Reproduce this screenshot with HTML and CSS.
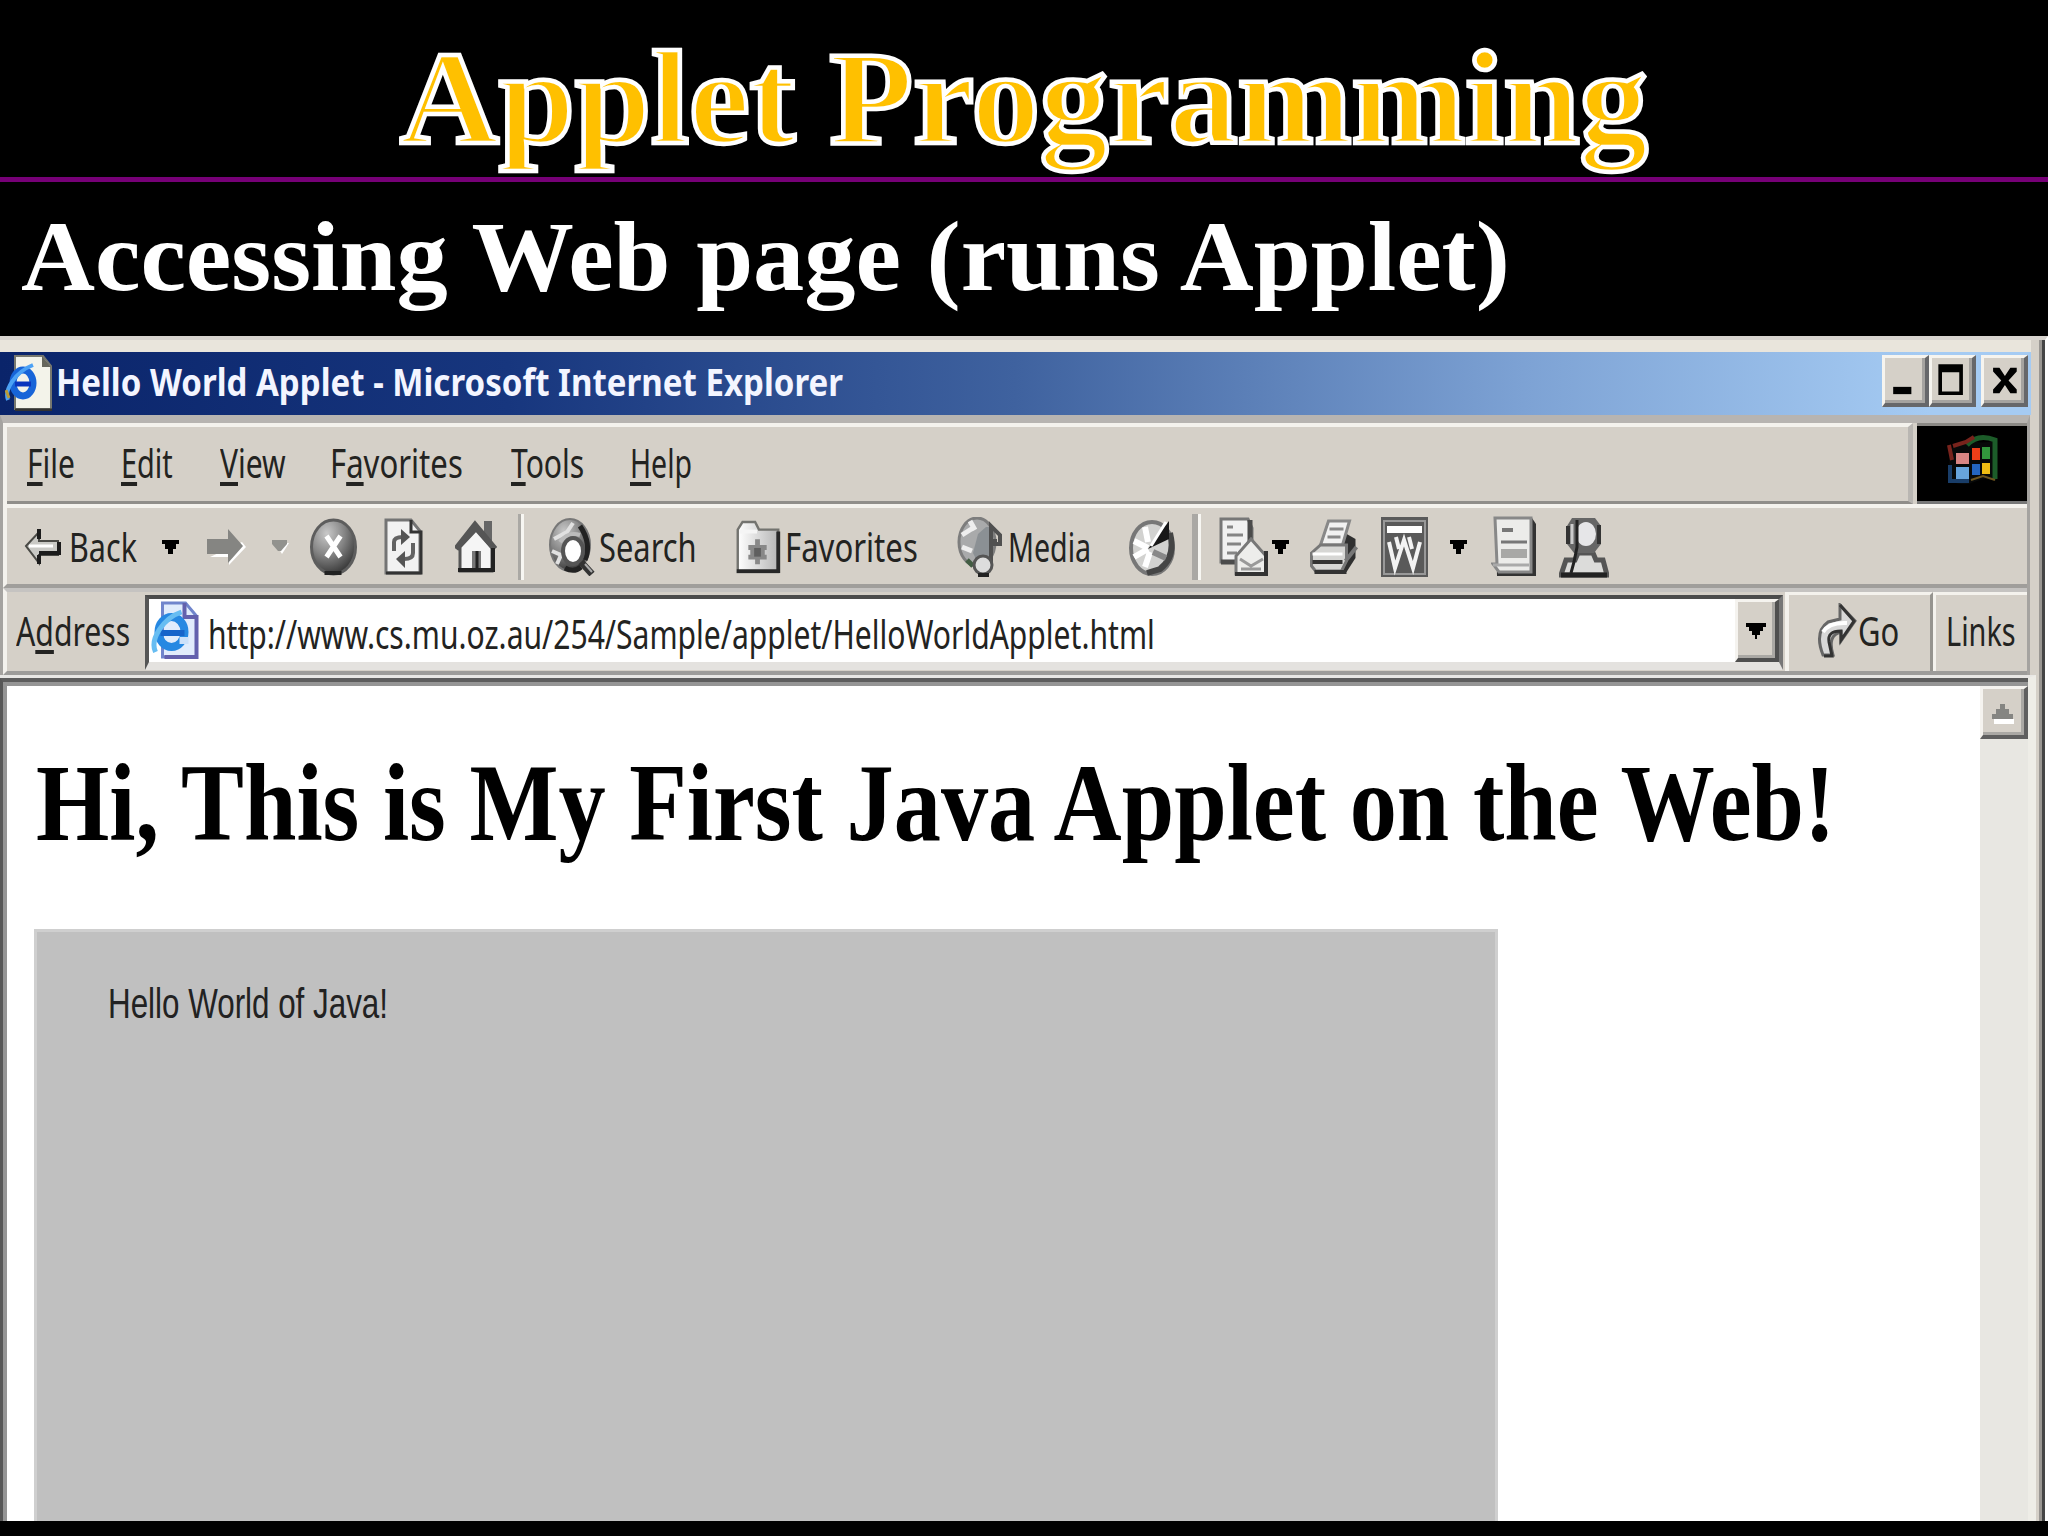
FILE: index.html
```
<!DOCTYPE html>
<html lang="en">
<head>
    <meta charset="UTF-8">
    <title>Applet Programming</title>
    <link rel="stylesheet" href="styles.css">
</head>
<body>
    <header class="slide-header">
        <h1 class="fit slide-title"><span>Applet Programming</span></h1>
    </header>
    <h2 class="fit slide-subtitle"><span>Accessing Web page (runs Applet)</span></h2>

    <div class="window">
        <div class="titlebar">
            <svg class="title-icon" viewBox="0 0 48 56">
                <path d="M10 1h28l8 10v43H10z" fill="#f3f3ea" stroke="#77786f" stroke-width="2"/>
                <path d="M37 1v11h9z" fill="#66665c"/>
                <path d="M10 55h37" stroke="#333" stroke-width="3"/>
                <ellipse cx="18" cy="28" rx="10" ry="13" fill="none" stroke="#1764d8" stroke-width="7"/>
                <path d="M10 29h16" stroke="#0a35bd" stroke-width="5"/>
                <path d="M3 45C-1 35 10 17 28 10" fill="none" stroke="#4ba1f5" stroke-width="4"/>
                <path d="M1 35l3 8" stroke="#b99c37" stroke-width="3"/>
            </svg>
            <div class="fit title-text"><span>Hello World Applet - Microsoft Internet Explorer</span></div>
            <div class="win-buttons">
                <div class="win-btn"><svg viewBox="0 0 44 48"><path d="M9 31h20v8H9z"/></svg></div>
                <div class="win-btn"><svg viewBox="0 0 44 48"><path d="M7 6h27v34H7zM11 15v21h19V15z" fill-rule="evenodd"/></svg></div>
                <div class="win-btn close"><svg viewBox="0 0 44 48"><path d="M10 10h7l6 9 6-9h7v4l-9 10 9 10v4h-7l-6-9-6 9h-7v-4l9-10-9-10z"/></svg></div>
            </div>
        </div>

        <div class="bars">
            <div class="menubar">
                <div class="menus">
                    <div class="fit menu file"><span><u>F</u>ile</span></div>
                    <div class="fit menu edit"><span><u>E</u>dit</span></div>
                    <div class="fit menu view"><span><u>V</u>iew</span></div>
                    <div class="fit menu favorites"><span>F<u>a</u>vorites</span></div>
                    <div class="fit menu tools"><span><u>T</u>ools</span></div>
                    <div class="fit menu help"><span><u>H</u>elp</span></div>
                </div>
                <div class="logo">
                    <svg viewBox="0 0 56 56">
                        <path d="M4 19Q18 5 29 9T51 7V49Q39 45 29 50T5 49z" fill="#070909"/>
                        <path d="M22 13Q33 1 50 8v39" fill="none" stroke="#1c5c29" stroke-width="5"/>
                        <path d="M4 13l3 15M8 14l13-4 8-5" fill="none" stroke="#78231c" stroke-width="4"/>
                        <path d="M5 33v16h19" fill="none" stroke="#193d68" stroke-width="4"/>
                        <path d="M26 48l12-4 12 4" fill="none" stroke="#6c541e" stroke-width="2"/>
                        <path d="M11 21h13v11H11z" fill="#d88583"/>
                        <path d="M11 35h13v12H11z" fill="#67a4dc"/>
                        <path d="M27 16h8v12h-8z" fill="#ed3e18"/>
                        <path d="M37 15h8v12h-8z" fill="#31973c"/>
                        <path d="M27 32h8v11h-8z" fill="#2465bf"/>
                        <path d="M37 31h8v11h-8z" fill="#f0bd13"/>
                    </svg>
                </div>
            </div>

            <div class="toolbar">
                <svg class="ico back-ico" viewBox="0 0 38 38">
                    <path d="M3 18L16 4v9h19v14H16v8z" fill="#c9c9c5" stroke="#4a4a46" stroke-width="2"/>
                    <path d="M16 1v10M16 27v9M16 25h20V14" fill="none" stroke="#1c1c1c" stroke-width="4"/>
                    <path d="M6 18h24" stroke="#fff" stroke-width="3"/>
                </svg>
                <div class="fit label back"><span>Back</span></div>
                <svg class="caret c1" viewBox="0 0 17 14"><path d="M0 0h17v4h-3v5h-3v5H6V9H3V4H0z"/></svg>
                <svg class="ico fwd-ico" viewBox="0 0 40 38">
                    <path d="M3 29h19v8l17-18-4-5" fill="#fff"/>
                    <path d="M0 11h21V1l15 17-15 17v-9H0z" fill="#858582"/>
                </svg>
                <svg class="caret c2" viewBox="0 0 17 14"><path d="M3 3h14l-7 11z" fill="#fff"/><path d="M0 0h15v4l-6 7H6L0 4z" fill="#92928e"/></svg>
                <svg class="ico stop-ico" viewBox="0 0 48 58">
                    <defs>
                        <radialGradient id="ball" cx=".35" cy=".25" r=".8"><stop offset="0" stop-color="#c9c9c9"/><stop offset=".5" stop-color="#858585"/><stop offset="1" stop-color="#333"/></radialGradient>
                        <linearGradient id="paper"><stop offset="0" stop-color="#fff"/><stop offset="1" stop-color="#b6b6b6"/></linearGradient>
                    </defs>
                    <ellipse cx="24" cy="29" rx="22" ry="27" fill="url(#ball)" stroke="#5d5d5d" stroke-width="3"/>
                    <path d="M15 55h17" stroke="#222" stroke-width="4"/>
                    <path d="M17 18l14 21M31 18L17 39" stroke="#fff" stroke-width="5"/>
                </svg>
                <svg class="ico refresh-ico" viewBox="0 0 39 58">
                    <path d="M2 2h25l9 11v42H2z" fill="#f2f2f2" stroke="#747474" stroke-width="3"/>
                    <path d="M27 2v12h10v41H2" fill="none" stroke="#333" stroke-width="3"/>
                    <path d="M10 33V24q0-5 9-5M29 25v10q0 6-9 6" fill="none" stroke="#626262" stroke-width="4"/>
                    <path d="M17 11l9 8-9 8zM21 33l-9 8 9 9z" fill="#555"/>
                </svg>
                <svg class="ico home-ico" viewBox="0 0 42 54">
                    <path d="M29 1h8v22h-8z" fill="#666"/>
                    <path d="M5 27L21 10l16 18v23H5z" fill="#f5f5f5" stroke="#555" stroke-width="3"/>
                    <path d="M1 29L20 5l20 24" fill="none" stroke="#555" stroke-width="6"/>
                    <path d="M17 51V31h9v20z" fill="#777"/><path d="M22 31v20" stroke="#222" stroke-width="3"/>
                    <path d="M3 50h35V28" fill="none" stroke="#222" stroke-width="4"/>
                </svg>
                <div class="sep s1"></div>
                <svg class="ico search-ico" viewBox="0 0 48 58">
                    <ellipse cx="22" cy="27" rx="20" ry="26" fill="url(#ball)" stroke="#777" stroke-width="2"/>
                    <path d="M6 21l13-7 6-9M4 33l9 4-4 9" fill="none" stroke="#e1e1e1" stroke-width="4"/>
                    <path d="M12 24q8-11 20-7" fill="none" stroke="#bbb" stroke-width="4"/>
                    <path d="M32 8q12 18 5 34" fill="none" stroke="#222" stroke-width="5"/>
                    <ellipse cx="25" cy="33" rx="10" ry="13" fill="#fff" stroke="#555" stroke-width="4"/>
                    <path d="M17 50q9 5 16-1" fill="none" stroke="#222" stroke-width="5"/>
                    <path d="M33 44l11 12" stroke="#333" stroke-width="7"/>
                    <path d="M37 46l7 8" stroke="#aaa" stroke-width="2"/>
                </svg>
                <div class="fit label search"><span>Search</span></div>
                <svg class="ico fav-ico" viewBox="0 0 46 56">
                    <path d="M2 54V10L7 2h13l4 8h20v44z" fill="url(#paper)" stroke="#73736f" stroke-width="2.5"/>
                    <path d="M4 12h18" stroke="#f5f5f5" stroke-width="4"/>
                    <path d="M20 20h5v6h7v5h-2v5h2v5h-7v5h-5v-5h-7v-5h2v-5h-2v-5h7z" fill="#888"/>
                    <path d="M19 29h7v9h-7z" fill="#5f5f5f"/>
                    <path d="M1 53h43V12" fill="none" stroke="#272727" stroke-width="4"/>
                </svg>
                <div class="fit label fav"><span>Favorites</span></div>
                <svg class="ico media-ico" viewBox="0 0 48 60">
                    <ellipse cx="20" cy="25" rx="18" ry="24" fill="#a9aaab" stroke="#7d7d7d" stroke-width="3"/>
                    <path d="M5 18l11-7M5 30l10 4M13 4l5 9" stroke="#eee" stroke-width="5"/>
                    <path d="M16 36l5-19 8-7h5v32H19z" fill="#8b9094"/>
                    <path d="M34 49V9l9 9v9h-5v-5" fill="none" stroke="#505050" stroke-width="4"/>
                    <path d="M10 43l6 6" stroke="#425d43" stroke-width="5"/>
                    <ellipse cx="26" cy="48" rx="9" ry="9" fill="#ddd" stroke="#555" stroke-width="3"/>
                    <path d="M21 58h11" stroke="#222" stroke-width="4"/>
                </svg>
                <div class="fit label media"><span>Media</span></div>
                <svg class="ico history-ico" viewBox="0 0 48 60">
                    <ellipse cx="24" cy="31" rx="21" ry="26" fill="#d2d2d0" stroke="#777" stroke-width="4"/>
                    <path d="M42 16q6 24-10 36l-13 4" fill="none" stroke="#454545" stroke-width="6"/>
                    <path d="M17 10l3 15M6 24l14 7M6 40l14-8M17 50l5-15" stroke="#fff" stroke-width="6"/>
                    <path d="M20 32L41 4v18z" fill="#181818"/><path d="M23 29L38 5" stroke="#fff" stroke-width="3"/>
                    <path d="M25 35l13 6" stroke="#888" stroke-width="6"/>
                </svg>
                <div class="sep s2"></div>
                <svg class="ico mail-ico" viewBox="0 0 50 60">
                    <path d="M2 2h27l4 9v34H2z" fill="#f1f1f1" stroke="#777" stroke-width="3"/>
                    <path d="M31 3v28M2 45h16" stroke="#4b4b4b" stroke-width="5"/>
                    <path d="M8 10h6M8 18h16M8 27h14M8 36h10" stroke="#858585" stroke-width="3"/>
                    <path d="M17 57V39l15-17 15 17v18z" fill="#ededeb" stroke="#777" stroke-width="3"/>
                    <path d="M21 42l11 7 12-7M22 52h20" fill="none" stroke="#999" stroke-width="3"/>
                    <path d="M16 57h31V34" fill="none" stroke="#333" stroke-width="4"/>
                </svg>
                <svg class="caret c3" viewBox="0 0 17 14"><path d="M0 0h17v4h-3v5h-3v5H6V9H3V4H0z"/></svg>
                <svg class="ico print-ico" viewBox="0 0 50 56">
                    <path d="M32 12l14 8v19l-9 14H23z" fill="#303030"/>
                    <path d="M11 26L19 2h21l-7 24z" fill="#f1f1f1" stroke="#888" stroke-width="3"/>
                    <path d="M20 10h14M18 18h13" stroke="#888" stroke-width="3"/>
                    <path d="M2 34l9-8h26v16l-5 10H6l-4-5z" fill="#d6d6d4" stroke="#777" stroke-width="3"/>
                    <path d="M3 35h30" stroke="#fff" stroke-width="3"/><path d="M3 43h30M5 53h32" stroke="#333" stroke-width="4"/>
                    <path d="M36 42l11-14" stroke="#777" stroke-width="4"/>
                </svg>
                <svg class="ico word-ico" viewBox="0 0 47 60">
                    <path d="M0 0h47v60H0z" fill="#5a5a5a"/>
                    <path d="M3 4h41v53H3z" fill="none" stroke="#999" stroke-width="2"/>
                    <path d="M6 9h35v7H6z" fill="#fff"/>
                    <path d="M8 25l6 26 9-28 9 28 7-26M15 20l3 12M28 20l3 12" fill="none" stroke="#f3f3f3" stroke-width="4"/>
                </svg>
                <svg class="caret c4" viewBox="0 0 17 14"><path d="M0 0h17v4h-3v5h-3v5H6V9H3V4H0z"/></svg>
                <svg class="ico doc-ico" viewBox="0 0 48 62">
                    <path d="M5 2h36l4 6v52H6z" fill="#333"/>
                    <path d="M4 2h36v54H8l-6-8h4z" fill="#ececea" stroke="#888" stroke-width="3"/>
                    <path d="M11 14h11" stroke="#777" stroke-width="4"/><path d="M10 26h26" stroke="#777" stroke-width="3"/>
                    <path d="M10 33h26v9H10z" fill="#a8a8a6"/>
                    <path d="M2 49h36" stroke="#aaa" stroke-width="3"/>
                </svg>
                <svg class="ico person-ico" viewBox="0 0 50 62">
                    <path d="M2 59l5-15h9l3-7h15l3 7h7l4 15z" fill="#dcdcda" stroke="#555" stroke-width="5"/>
                    <path d="M2 59h46" stroke="#222" stroke-width="5"/>
                    <path d="M13 2h23l6 8v18l-7 9H15l-7-9V10z" fill="#666"/>
                    <ellipse cx="27" cy="18" rx="10" ry="12" fill="#e6e6e8"/>
                    <path d="M18 4v27l-3 15-3 11" fill="none" stroke="#222" stroke-width="3"/>
                    <path d="M13 8v20" stroke="#ccc" stroke-width="3"/>
                    <path d="M9 10v18M40 9v19" fill="none" stroke="#333" stroke-width="4"/>
                </svg>
            </div>

            <div class="addressbar">
                <div class="fit label address"><span>A<u>d</u>dress</span></div>
                <div class="field">
                    <svg class="url-icon" viewBox="0 0 48 58">
                        <path d="M11 2h23l11 13v41H11z" fill="#e1ecfc" stroke="#7085cc" stroke-width="3"/>
                        <path d="M33 2v14h12v40H13" fill="none" stroke="#6361ad" stroke-width="4"/>
                        <ellipse cx="20" cy="31" rx="13" ry="15" fill="none" stroke="#2688e2" stroke-width="8"/>
                        <path d="M9 32h24" stroke="#1764ca" stroke-width="6"/>
                        <path d="M4 51C-2 38 12 17 30 11" fill="none" stroke="#67bdf2" stroke-width="5"/>
                        <path d="M28 36h9v7h-9z" fill="#cce1fa"/>
                    </svg>
                    <div class="fit label url"><span>http://www.cs.mu.oz.au/254/Sample/applet/HelloWorldApplet.html</span></div>
                    <div class="drop"><svg class="caret" viewBox="0 0 20 16"><path d="M0 0h20v4h-3v4h-3v4h-3v4H9v-4H6V8H3V4H0z"/></svg></div>
                </div>
                <div class="go">
                    <svg class="go-icon" viewBox="0 0 40 55">
                        <path d="M11 52H6Q-3 29 11 19l12-3V2l15 16-14 20v-9q-14 3-8 23z" fill="#d8d8d8" stroke="#666" stroke-width="3"/>
                        <path d="M6 29q6-10 24-9" fill="none" stroke="#fff" stroke-width="4"/>
                        <path d="M23 2l14 16-13 19v-9q-14 0-12 11l3 14H7" fill="none" stroke="#333" stroke-width="3"/>
                    </svg>
                    <div class="fit label go-text"><span>Go</span></div>
                </div>
                <div class="links"><div class="fit label links-text"><span>Links</span></div></div>
            </div>
        </div>

        <div class="page">
            <div class="document">
                <h1 class="fit page-title"><span>Hi, This is My First Java Applet on the Web!</span></h1>
                <div class="applet"><div class="fit applet-text"><span>Hello World of Java!</span></div></div>
            </div>
            <div class="scrollbar">
                <div class="scroll-btn"><svg viewBox="0 0 22 20"><path d="M2 15h20v5H2z" fill="#fff"/><path d="M8 0h5v5h4v5h4v5H0v-5h4V5h4z" fill="#858582"/></svg></div>
            </div>
        </div>
    </div>
    <script src="fit.js"></script>
</body>
</html>
```
FILE: styles.css
```
* {
    box-sizing: border-box;
}
body {
    margin: 0;
    width: 2048px;
    height: 1536px;
    overflow: hidden;
    background: #000;
    font-family: "Noto Sans", sans-serif;
}
svg {
    display: block;
    flex: none;
}
h1, h2 {
    margin: 0;
}
/* fixed width text, the inner span is squeezed to the width in fit.js */
.fit {
    flex: none;
    white-space: nowrap;
}
.fit span {
    display: inline-block;
    transform-origin: 0 50%;
}
.slide-header {
    height: 182px;
    padding-top: 20px;
    border-bottom: 5px solid #760076;
}
.slide-title {
    width: 1248px;
    margin: 0 auto;
    font: bold 133px/156px "Liberation Serif", serif;
    color: #ffc000;
    -webkit-text-stroke: 4.5px #fff;
}
.slide-subtitle {
    width: 1489px;
    height: 154px;
    margin-left: 21px;
    padding-top: 17px;
    font: bold 100px/116px "Liberation Serif", serif;
    color: #fff;
}
.window {
    display: flex;
    flex-direction: column;
    width: 2048px;
    height: 1185px;
    overflow: hidden;
    background: #d5d0c8;
    border-right: 3px solid #fff;
    box-shadow: inset -3px 0 #454545, inset -6px 0 #999692;
    border-top: 4px solid #d8d4cf;
}
.titlebar {
    display: flex;
    height: 75px;
    width: 2031px;
    padding: 3px 3px 0 5px;
    border-top: 12px solid #e9e5dc;
    background: linear-gradient(90deg, #0a246a 0, #17367e 25%, #3f629f 50%, #7da2d4 75%, #a5cbf3 95%);
}
.title-icon {
    width: 48px;
    height: 56px;
}
.title-text {
    width: 787px;
    margin-left: 3px;
    font-size: 38px;
    font-weight: bold;
    line-height: 52px;
    color: #f3f5ff;
}
.win-buttons {
    display: flex;
    margin-left: auto;
}
.win-btn {
    width: 47px;
    height: 52px;
    background: #d5d0c8;
    border-style: solid;
    border-width: 3px 4px 4px 3px;
    border-color: #f6f4ef #66676a #66676a #f6f4ef;
    box-shadow: inset -3px -3px #a5a3a0;
}
.win-btn.close {
    margin-left: 5px;
}
.win-btn svg {
    width: 40px;
    height: 45px;
}
.bars {
    width: 2030px;
    border-top: 8px solid #b7b4b1;
    border-left: 3px solid #a5a3a0;
    border-right: 3px solid #a5a3a0;
}
.menubar {
    display: flex;
    height: 81px;
    border-left: 4px solid #f4f2ed;
}
.menus {
    display: flex;
    width: 1906px;
    padding-left: 20px;
    border-top: 4px solid #f4f2ed;
    border-bottom: 3px solid #908e8a;
    border-right: 5px solid #b9b6b2;
}
.menu, .label {
    font-size: 40px;
    color: #232321;
}
.menu {
    line-height: 71px;
}
u {
    text-decoration-thickness: 4px;
    text-underline-offset: 4px;
    text-decoration-skip-ink: none;
}
.file { width: 48px; }
.edit { width: 52px; margin-left: 46px; }
.view { width: 66px; margin-left: 47px; }
.favorites { width: 133px; margin-left: 44px; }
.tools { width: 73px; margin-left: 48px; }
.help { width: 62px; margin-left: 46px; }
.logo {
    flex: 1;
    margin-left: 4px;
    padding: 6px 0 0 28px;
    background: #000;
    border-top: 3px solid #8b8985;
    border-bottom: 3px solid #777;
}
.logo svg {
    width: 56px;
    height: 56px;
}
.toolbar {
    display: flex;
    align-items: center;
    height: 84px;
    padding: 2px 0 0 16px;
    border-left: 4px solid #f4f2ed;
    border-top: 4px solid #f4f2ed;
    border-bottom: 4px solid #a09e9b;
}
.toolbar .label {
    line-height: 52px;
}
.back-ico { width: 38px; height: 38px; }
.fwd-ico { width: 40px; height: 38px; margin-left: 28px; }
.stop-ico { width: 49px; height: 58px; margin-left: 20px; }
.refresh-ico { width: 39px; height: 58px; margin-left: 26px; }
.home-ico { width: 42px; height: 54px; margin-left: 32px; }
.search-ico { width: 48px; height: 58px; margin-left: 24px; }
.fav-ico { width: 46px; height: 54px; margin-left: 38px; }
.media-ico { width: 48px; height: 60px; margin-left: 39px; }
.history-ico { width: 50px; height: 60px; margin-left: 36px; }
.mail-ico { width: 50px; height: 60px; margin-left: 18px; }
.print-ico { width: 51px; height: 56px; margin-left: 20px; }
.word-ico { width: 47px; height: 60px; margin-left: 21px; }
.doc-ico { width: 48px; height: 62px; margin-left: 24px; }
.person-ico { width: 50px; height: 62px; margin-left: 20px; }
.caret {
    width: 17px;
    height: 14px;
}
.c1 { margin-left: 25px; }
.c2 { margin-left: 25px; }
.c3 { margin-left: 3px; }
.c4 { margin-left: 22px; }
.back { width: 68px; margin-left: 8px; }
.search { width: 98px; margin-left: 3px; }
.fav { width: 133px; margin-left: 4px; }
.media { width: 83px; margin-left: 3px; }
.sep {
    width: 6px;
    height: 66px;
    background: #aaa8a4;
    border-right: 3px solid #f7f6f2;
}
.s1 { margin-left: 21px; }
.s2 { margin-left: 15px; width: 9px; }
.addressbar {
    display: flex;
    height: 87px;
    border-left: 4px solid #f4f2ed;
    border-top: 4px solid #c5c3c1;
    border-bottom: 4px solid #9d9c9a;
}
.addressbar .label {
    line-height: 78px;
}
.address {
    width: 114px;
    margin-left: 9px;
}
.addressbar .field {
    display: flex;
    width: 1638px;
    height: 75px;
    margin: 3px 0 0 15px;
    background: #fff;
    border: 4px solid #4c4c4c;
    border-left-color: #555;
    border-right-color: #777;
    border-bottom: 8px solid #e4e2df;
}
.url-icon {
    width: 49px;
    height: 58px;
    margin: 2px 0 0 2px;
}
.addressbar .url {
    width: 947px;
    margin-left: 8px;
    line-height: 69px;
}
.drop {
    width: 44px;
    margin-left: auto;
    padding: 21px 0 0 8px;
    background: #d5d0c8;
    border-style: solid;
    border-width: 3px 4px 4px 3px;
    border-color: #f5f3ef #4f4f4f #4f4f4f #f5f3ef;
    box-shadow: inset -3px -3px #aaa8a4;
}
.drop .caret {
    width: 20px;
    height: 16px;
}
.go {
    display: flex;
    width: 148px;
    margin-left: 2px;
    padding-left: 28px;
    border-left: 4px solid #f4f2ed;
    border-right: 3px solid #96948f;
    border-top: 3px solid #f4f2ed;
}
.go-icon {
    width: 40px;
    height: 55px;
    margin-top: 8px;
}
.go-text { width: 41px; margin-left: 1px; }
.addressbar .go-text, .addressbar .links-text { line-height: 72px; }
.links {
    flex: 1;
    padding-left: 10px;
    border-left: 3px solid #f4f2ed;
    border-top: 3px solid #f4f2ed;
}
.links-text { width: 70px; }
.page {
    display: flex;
    flex: 1;
    width: 2036px;
    min-height: 0;
    overflow: hidden;
    border-top: 3px solid #e8e7e5;
    border-right: 8px solid #eeede7;
}
.document {
    flex: 1;
    background: #fff;
    border-top: 4px solid #5d5d5d;
    border-left: 3px solid #575757;
    box-shadow: inset 4px 4px #959595;
    display: flex;
    flex-direction: column;
    padding: 56px 0 0 31px;
}
.page-title {
    width: 1801px;
    height: 191px;
    padding-left: 2px;
    font: bold 111px/130px "Liberation Serif", serif;
    color: #000;
}
.applet {
    flex: 1;
    width: 1464px;
    padding: 46px 0 0 71px;
    background: #c0c0c0;
    border: 3px solid #cfcfcf;
    border-bottom: 0;
}
.applet-text {
    width: 280px;
    font: 43px/50px "Liberation Sans", sans-serif;
    color: #222;
}
.scrollbar {
    width: 48px;
    background: #e8e7e2;
    border-top: 4px solid #5d5d5d;
    box-shadow: inset 0 4px #959595;
    padding-top: 4px;
}
.scroll-btn {
    height: 53px;
    padding: 15px 0 0 9px;
    background: #d5d0c8;
    border-style: solid;
    border-width: 3px 4px 4px 3px;
    border-color: #f5f3ef #5f5f5f #5f5f5f #f5f3ef;
    box-shadow: inset -3px -3px #aaa8a4;
}
.scroll-btn svg {
    width: 22px;
    height: 20px;
}
```
FILE: fit.js
```
document.querySelectorAll('.fit').forEach(box => {
    const span = box.firstElementChild;
    const style = getComputedStyle(box);
    const width = box.clientWidth - parseFloat(style.paddingLeft);
    span.style.transform = `scaleX(${width / span.offsetWidth})`;
});
```
